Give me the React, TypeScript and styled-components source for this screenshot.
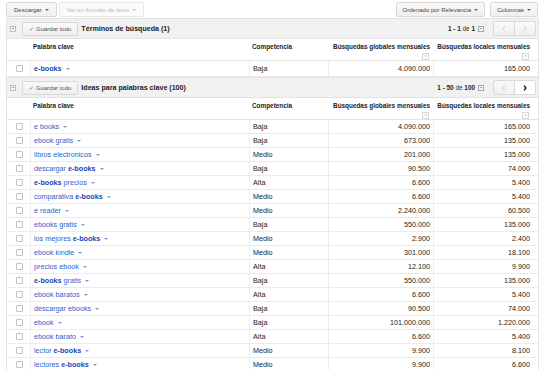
import React from 'react';
import styled, { createGlobalStyle } from 'styled-components';

interface KeywordRow {
  keyword: string;
  competition: string;
  global: string;
  local: string;
}

const GlobalStyle = createGlobalStyle`
  body {
    margin: 0;
    background: #fff;
    font-family: "Liberation Sans", Arial, Helvetica, sans-serif;
    color: #222;
  }
`;

const COLS = '23px 219px 79px 105px 105px';

const Page = styled.div`
  width: 545px;
  height: 370px;
  overflow: hidden;
  box-sizing: border-box;
  padding: 2px 0 0 6px;
`;

const Toolbar = styled.div`
  display: flex;
  align-items: center;
  justify-content: space-between;
  width: 532px;
  height: 15px;
  margin-bottom: 1px;
`;

const ToolGroup = styled.div<{ $gap: number }>`
  display: flex;
  gap: ${p => p.$gap}px;
`;

const ToolButton = styled.div<{ $disabled?: boolean; $pad?: number }>`
  display: flex;
  align-items: center;
  gap: 3px;
  height: 15px;
  box-sizing: border-box;
  padding: 0 ${p => p.$pad ?? 7}px;
  border: 1px solid ${p => (p.$disabled ? '#e8e8e8' : '#d8d8d8')};
  border-radius: 2px;
  background: ${p => (p.$disabled ? '#fbfbfb' : 'linear-gradient(#f9f9f9, #efefef)')};
  color: ${p => (p.$disabled ? '#b8b8b8' : '#444')};
  font-size: 6px;
  white-space: nowrap;
`;

const Caret = styled.span<{ $color?: string }>`
  display: inline-block;
  width: 0;
  height: 0;
  border-left: 2px solid transparent;
  border-right: 2px solid transparent;
  border-top: 2.5px solid ${p => p.$color ?? '#666'};
`;

const Section = styled.div<{ $top?: number }>`
  width: 533px;
  box-sizing: border-box;
  border-left: 1px solid #e4e4e4;
  border-right: 1px solid #e4e4e4;
  margin-top: ${p => p.$top ?? 0}px;
`;

const SectionHeader = styled.div`
  display: flex;
  align-items: center;
  height: 21px;
  box-sizing: border-box;
  background: #f1f1f1;
  border-top: 1px solid #e2e2e2;
  border-bottom: 1px solid #e2e2e2;
  padding: 0 2px 0 3px;
`;

const CollapseBox = styled.span`
  display: flex;
  align-items: center;
  justify-content: center;
  width: 6px;
  height: 6px;
  box-sizing: border-box;
  border: 1px solid #bdbdbd;
  background: #f8f8f8;
  margin-right: 6px;

  &::after {
    content: '';
    width: 2px;
    height: 1px;
    background: #9a9a9a;
  }
`;

const SaveButton = styled.div`
  display: flex;
  align-items: center;
  gap: 2px;
  height: 14px;
  box-sizing: border-box;
  padding: 0 6px;
  border: 1px solid #d8d8d8;
  border-radius: 2px;
  background: linear-gradient(#f9f9f9, #efefef);
  color: #555;
  font-size: 6px;
  white-space: nowrap;
`;

const Check = styled.span`
  font-size: 6px;
  color: #777;
`;

const SectionTitle = styled.span`
  margin-left: 3px;
  font-size: 7.1px;
  font-weight: bold;
  color: #222;
  white-space: nowrap;
  flex: 1;
`;

const PageInfo = styled.span`
  font-size: 6.4px;
  color: #333;
  white-space: nowrap;

  b {
    font-weight: bold;
    color: #222;
  }
`;

const PageSelect = styled.span`
  display: flex;
  align-items: center;
  justify-content: center;
  width: 6px;
  height: 6px;
  box-sizing: border-box;
  margin-left: 3px;
  border: 1px solid #a8a8a8;
  background: #f6f6f6;

  &::after {
    content: '';
    border-left: 1.2px solid transparent;
    border-right: 1.2px solid transparent;
    border-top: 1.5px solid #555;
  }
`;

const Pager = styled.div`
  display: flex;
  margin-left: 9px;
`;

const PagerButton = styled.div<{ $active?: boolean }>`
  display: flex;
  align-items: center;
  justify-content: center;
  width: 22px;
  height: 15px;
  box-sizing: border-box;
  border: 1px solid #dadada;
  background: ${p => (p.$active ? '#fff' : 'linear-gradient(#f9f9f9, #f0f0f0)')};

  & + & {
    margin-left: -1px;
  }
  &:first-child {
    border-radius: 2px 0 0 2px;
  }
  &:last-child {
    border-radius: 0 2px 2px 0;
  }
`;

const HeadRow = styled.div`
  display: grid;
  grid-template-columns: ${COLS};
  height: 22px;
  box-sizing: border-box;
  border-bottom: 1px solid #e4e4e4;
  background: #fff;
`;

const HeadCell = styled.div<{ $right?: boolean; $pr?: number }>`
  display: flex;
  flex-direction: column;
  align-items: ${p => (p.$right ? 'flex-end' : 'flex-start')};
  padding: 4px ${p => p.$pr ?? 0}px 0 3px;
  font-size: 6.4px;
  line-height: 8px;
  font-weight: bold;
  color: #222;
  white-space: nowrap;
`;

const Help = styled.span`
  display: flex;
  align-items: center;
  justify-content: center;
  width: 5px;
  height: 5px;
  margin-top: 2px;
  margin-right: 1px;
  border: 1px solid #d6d6d6;
  font-size: 4px;
  line-height: 1;
  font-weight: normal;
  color: #999;
`;

const DataRow = styled.div<{ $height?: number }>`
  display: grid;
  grid-template-columns: ${COLS};
  height: ${p => p.$height ?? 14}px;
  box-sizing: border-box;
  border-bottom: 1px solid #ebebeb;
  font-size: 7.2px;
`;

const Cell = styled.div<{ $right?: boolean; $pr?: number; $first?: boolean }>`
  display: flex;
  align-items: center;
  justify-content: ${p => (p.$right ? 'flex-end' : 'flex-start')};
  padding: 0 ${p => p.$pr ?? 0}px 0 ${p => (p.$first ? 0 : 3)}px;
  border-left: ${p => (p.$first ? 'none' : '1px solid #eeeeee')};
  color: #222;
  white-space: nowrap;
`;

const CheckCell = styled(Cell)`
  justify-content: center;
  padding: 0 0 0 1px;
`;

const Checkbox = styled.span`
  width: 7px;
  height: 7px;
  box-sizing: border-box;
  border: 1px solid #c2c2c2;
  border-radius: 1px;
  background: #fff;
`;

const Keyword = styled.span`
  color: #2a5fcf;

  b {
    font-weight: bold;
    color: #1646b8;
  }
`;

const KeywordCaret = styled(Caret)`
  margin-left: 4px;
`;

const Chevron: React.FC<{ dir: 'left' | 'right'; active?: boolean }> = ({ dir, active }) => (
  <svg width="4" height="6" viewBox="0 0 4 6">
    <polyline
      points={dir === 'left' ? '3,0.5 1,3 3,5.5' : '1,0.5 3,3 1,5.5'}
      fill="none"
      stroke={active ? '#222' : '#c4c4c4'}
      strokeWidth={active ? 1.3 : 0.8}
    />
  </svg>
);

const renderKeyword = (kw: string) =>
  kw.split(/(e-books)/).map((part, i) =>
    part === 'e-books' ? <b key={i}>{part}</b> : <React.Fragment key={i}>{part}</React.Fragment>
  );

const searchTerms: KeywordRow[] = [
  { keyword: 'e-books', competition: 'Baja', global: '4.090.000', local: '165.000' },
];

const ideas: KeywordRow[] = [
  { keyword: 'e books', competition: 'Baja', global: '4.090.000', local: '165.000' },
  { keyword: 'ebook gratis', competition: 'Baja', global: '673.000', local: '135.000' },
  { keyword: 'libros electronicos', competition: 'Medio', global: '201.000', local: '135.000' },
  { keyword: 'descargar e-books', competition: 'Baja', global: '90.500', local: '74.000' },
  { keyword: 'e-books precios', competition: 'Alta', global: '6.600', local: '5.400' },
  { keyword: 'comparativa e-books', competition: 'Medio', global: '6.600', local: '5.400' },
  { keyword: 'e reader', competition: 'Medio', global: '2.240.000', local: '60.500' },
  { keyword: 'ebooks gratis', competition: 'Baja', global: '550.000', local: '135.000' },
  { keyword: 'los mejores e-books', competition: 'Medio', global: '2.900', local: '2.400' },
  { keyword: 'ebook kindle', competition: 'Medio', global: '301.000', local: '18.100' },
  { keyword: 'precios ebook', competition: 'Alta', global: '12.100', local: '9.900' },
  { keyword: 'e-books gratis', competition: 'Baja', global: '550.000', local: '135.000' },
  { keyword: 'ebook baratos', competition: 'Alta', global: '6.600', local: '5.400' },
  { keyword: 'descargar ebooks', competition: 'Baja', global: '90.500', local: '74.000' },
  { keyword: 'ebook', competition: 'Baja', global: '101.000.000', local: '1.220.000' },
  { keyword: 'ebook barato', competition: 'Alta', global: '6.600', local: '5.400' },
  { keyword: 'lector e-books', competition: 'Medio', global: '9.900', local: '8.100' },
  { keyword: 'lectores e-books', competition: 'Medio', global: '9.900', local: '6.600' },
];

interface ResultsProps {
  title: string;
  from: string;
  to: string;
  total: string;
  hasNext: boolean;
  rows: KeywordRow[];
  rowHeight?: number;
  top?: number;
}

const Results: React.FC<ResultsProps> = ({ title, from, to, total, hasNext, rows, rowHeight, top }) => (
  <Section $top={top}>
    <SectionHeader>
      <CollapseBox />
      <SaveButton>
        <Check>✓</Check>
        Guardar todo
      </SaveButton>
      <SectionTitle>{title}</SectionTitle>
      <PageInfo>
        <b>
          {from} - {to}
        </b>{' '}
        de <b>{total}</b>
      </PageInfo>
      <PageSelect />
      <Pager>
        <PagerButton>
          <Chevron dir="left" />
        </PagerButton>
        <PagerButton $active={hasNext}>
          <Chevron dir="right" active={hasNext} />
        </PagerButton>
      </Pager>
    </SectionHeader>

    <HeadRow>
      <div />
      <HeadCell>Palabra clave</HeadCell>
      <HeadCell>Competencia</HeadCell>
      <HeadCell $right $pr={3}>
        Búsquedas globales mensuales
        <Help>?</Help>
      </HeadCell>
      <HeadCell $right $pr={8}>
        Búsquedas locales mensuales
        <Help>?</Help>
      </HeadCell>
    </HeadRow>

    {rows.map(row => (
      <DataRow key={row.keyword} $height={rowHeight}>
        <CheckCell $first>
          <Checkbox />
        </CheckCell>
        <Cell>
          <Keyword>{renderKeyword(row.keyword)}</Keyword>
          <KeywordCaret $color="#7f98d8" />
        </Cell>
        <Cell>{row.competition}</Cell>
        <Cell $right $pr={3}>
          {row.global}
        </Cell>
        <Cell $right $pr={8}>
          {row.local}
        </Cell>
      </DataRow>
    ))}
  </Section>
);

export default function App() {
  return (
    <>
      <GlobalStyle />
      <Page>
        <Toolbar>
          <ToolGroup $gap={2}>
            <ToolButton>
              Descargar <Caret />
            </ToolButton>
            <ToolButton $disabled>
              Ver en formato de texto <Caret $color="#c4c4c4" />
            </ToolButton>
          </ToolGroup>
          <ToolGroup $gap={5}>
            <ToolButton $pad={6}>
              Ordenado por Relevancia <Caret />
            </ToolButton>
            <ToolButton $pad={6}>
              Columnas <Caret />
            </ToolButton>
          </ToolGroup>
        </Toolbar>

        <Results
          title="Términos de búsqueda (1)"
          from="1"
          to="1"
          total="1"
          hasNext={false}
          rows={searchTerms}
          rowHeight={16}
        />
        <Results
          title="Ideas para palabras clave (100)"
          from="1"
          to="50"
          total="100"
          hasNext
          rows={ideas}
        />
      </Page>
    </>
  );
}
